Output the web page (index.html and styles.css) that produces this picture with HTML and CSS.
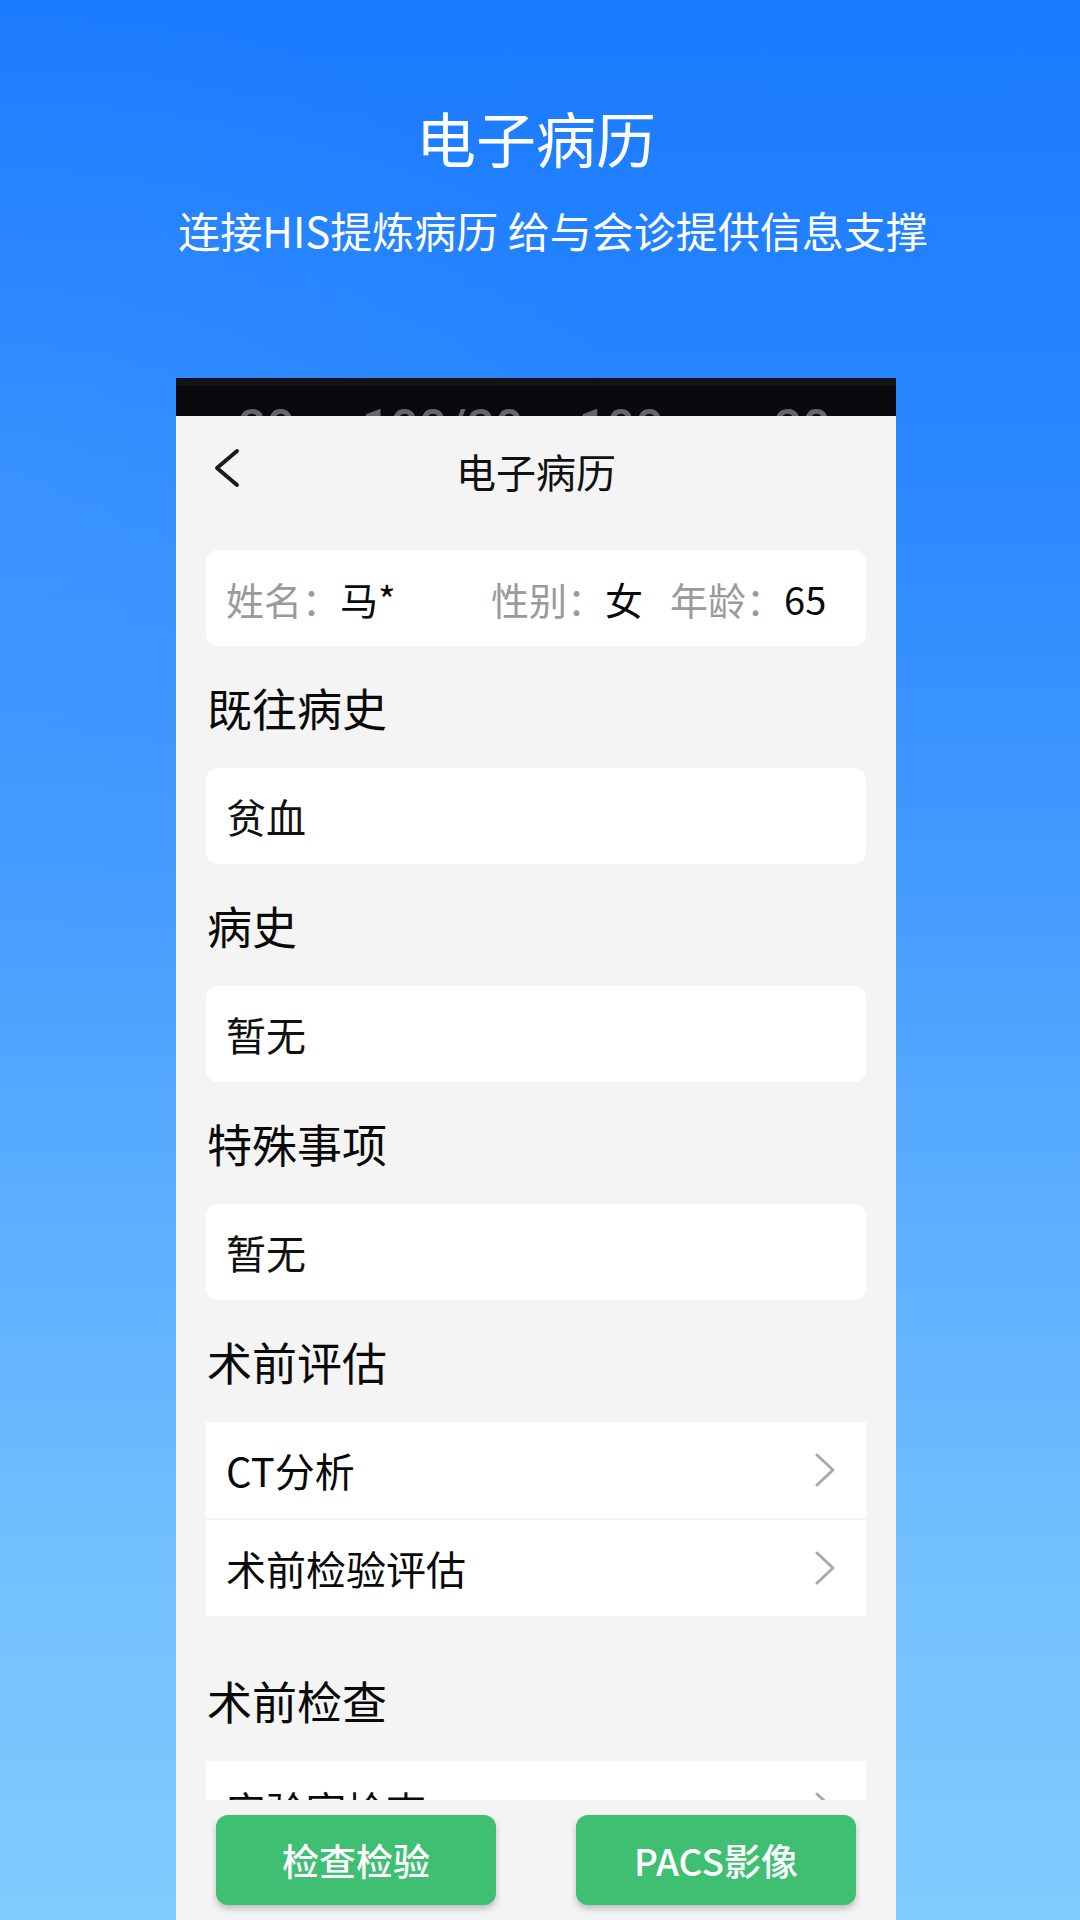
FILE: index.html
```html
<!DOCTYPE html>
<html lang="zh-CN">
<head>
<meta charset="utf-8">
<title>电子病历</title>
<link rel="stylesheet" href="styles.css">
</head>
<body>
<div class="page">
  <header class="hero">
    <h1 class="hero-title">电子病历</h1>
    <p class="hero-sub">连接HIS提炼病历 给与会诊提供信息支撑</p>
  </header>

  <div class="phone">
    <div class="status">
      <span class="st st1">20</span>
      <span class="st st2">100/20</span>
      <span class="st st3">100</span>
      <span class="st st4">20</span>
    </div>
    <div class="nav">
      <div class="nav-left">
        <svg class="back" width="28" height="40" viewBox="0 0 28 40"><polyline points="24,3 4,20 24,37" fill="none" stroke="#1c1c1c" stroke-width="4" stroke-linecap="round" stroke-linejoin="round"/></svg>
      </div>
      <div class="nav-title">电子病历</div>
      <div class="nav-right"></div>
    </div>

    <div class="scroll">
      <div class="card info">
        <div class="grp grp-name"><span class="lbl">姓名：</span><span class="val">马*</span></div>
        <div class="grp grp-sex"><span class="lbl">性别：</span><span class="val">女</span></div>
        <div class="grp"><span class="lbl">年龄：</span><span class="val">65</span></div>
      </div>

      <div class="heading">既往病史</div>
      <div class="card">贫血</div>

      <div class="heading">病史</div>
      <div class="card">暂无</div>

      <div class="heading">特殊事项</div>
      <div class="card">暂无</div>

      <div class="heading">术前评估</div>
      <div class="list">
        <div class="row"><span>CT分析</span><svg class="chev" width="22" height="34" viewBox="0 0 22 34"><polyline points="3,2 19,17 3,32" fill="none" stroke="#aaaaaa" stroke-width="3" stroke-linecap="round" stroke-linejoin="round"/></svg></div>
        <div class="row"><span>术前检验评估</span><svg class="chev" width="22" height="34" viewBox="0 0 22 34"><polyline points="3,2 19,17 3,32" fill="none" stroke="#aaaaaa" stroke-width="3" stroke-linecap="round" stroke-linejoin="round"/></svg></div>
      </div>

      <div class="heading heading-gap">术前检查</div>
      <div class="list">
        <div class="row"><span>实验室检查</span><svg class="chev" width="22" height="34" viewBox="0 0 22 34"><polyline points="3,2 19,17 3,32" fill="none" stroke="#aaaaaa" stroke-width="3" stroke-linecap="round" stroke-linejoin="round"/></svg></div>
      </div>
    </div>

    <div class="bottom">
      <div class="btn">检查检验</div>
      <div class="btn">PACS影像</div>
    </div>
  </div>
</div>
</body>
</html>
```

FILE: styles.css
```css
* { box-sizing: border-box; margin: 0; padding: 0; }

html, body {
  width: 1080px;
  height: 1920px;
  overflow: hidden;
}

body {
  font-family: "Noto Sans CJK SC", "Noto Sans", sans-serif;
  background: #80cbff;
}

.page {
  width: 1080px;
  height: 1920px;
  display: flex;
  flex-direction: column;
  background:
    radial-gradient(ellipse 900px 700px at 0% 25%, rgba(120, 190, 255, 0.18), rgba(120, 190, 255, 0) 70%),
    linear-gradient(180deg, #1b7bff 0%, #2584ff 20%, #3c95ff 40%, #5aadff 62%, #72c0ff 82%, #80cbff 100%);
}

.hero {
  padding-top: 101px;
  text-align: center;
  color: #ffffff;
}

.hero-title {
  font-size: 60px;
  font-weight: 400;
  line-height: 72px;
  margin-left: -8px;
}

.hero-sub {
  margin-top: 33px;
  font-size: 42px;
  font-weight: 400;
  line-height: 48px;
  margin-left: 26px;
}

.phone {
  margin-top: 124px;
  margin-left: 176px;
  width: 720px;
  flex: 1;
  min-height: 0;
  display: flex;
  flex-direction: column;
  background: #f4f4f4;
  overflow: hidden;
}

.status {
  height: 38px;
  flex: none;
  background: linear-gradient(180deg, #121217 0px, #121217 8px, #0a0a0e 8px);
  overflow: hidden;
  display: flex;
  align-items: flex-start;
  padding-top: 25px;
  font-family: Roboto, "Noto Sans", sans-serif;
  font-size: 50px;
  line-height: 50px;
  color: #666666;
  font-weight: 500;
}

.st { display: block; flex: none; height: 13px; overflow: hidden; }
.st1 { margin-left: 62px; }
.st2 { margin-left: 67px; }
.st3 { margin-left: 55px; }
.st4 { margin-left: 110px; }

.nav {
  height: 110px;
  flex: none;
  display: grid;
  grid-template-columns: 1fr auto 1fr;
  align-items: center;
}

.nav-left {
  display: flex;
  align-items: center;
  padding-left: 37px;
}

.back { display: block; margin-top: -6px; }

.nav-title {
  font-size: 40px;
  line-height: 50px;
  color: #111111;
}

.scroll {
  flex: 1;
  min-height: 0;
  overflow: hidden;
  padding: 24px 30px 0;
}

.card {
  height: 96px;
  background: #ffffff;
  border-radius: 12px;
  padding-left: 20px;
  display: flex;
  align-items: center;
  font-size: 40px;
  color: #111111;
}

.info { padding-left: 20px; font-size: 38px; }

.grp { display: flex; white-space: nowrap; }
.grp-name { width: 265px; }
.grp-sex { margin-right: 27px; }

.lbl { color: #9a9a9a; }
.val { color: #0a0a0a; }

.heading {
  height: 122px;
  display: flex;
  align-items: center;
  font-size: 45px;
  color: #0a0a0a;
  padding-left: 1px;
}

.heading-gap { margin-top: 23px; }

.list {
  display: flex;
  flex-direction: column;
  gap: 2px;
}

.row {
  height: 96px;
  background: #ffffff;
  display: flex;
  align-items: center;
  justify-content: space-between;
  padding-left: 20px;
  padding-right: 30px;
  font-size: 40px;
  color: #0a0a0a;
}

.chev { display: block; }

.bottom {
  height: 120px;
  flex: none;
  background: #f4f4f4;
  display: flex;
  justify-content: space-between;
  padding: 15px 40px 0;
}

.btn {
  width: 280px;
  height: 90px;
  border-radius: 12px;
  background: #3ebf72;
  box-shadow: 0 4px 6px rgba(0, 0, 0, 0.22);
  color: #ffffff;
  font-size: 37px;
  font-weight: 500;
  display: flex;
  align-items: center;
  justify-content: center;
}
```
